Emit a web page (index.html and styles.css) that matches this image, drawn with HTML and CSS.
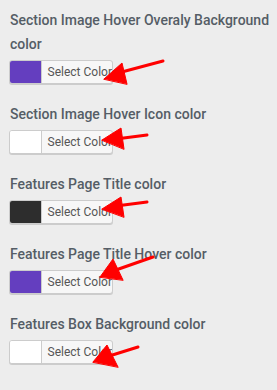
FILE: index.html
```html
<!DOCTYPE html>
<html lang="en">

<head>
    <meta charset="UTF-8">
    <meta name="viewport" content="width=device-width, initial-scale=1.0">
    <title>Color options</title>
    <link rel="stylesheet" href="styles.css">
</head>

<body>
    <div class="options">
        <div class="option">
            <label class="option-label">Section Image Hover Overaly Background color</label>
            <button class="color-btn"><span class="swatch purple"></span><span class="btn-text">Select Color</span></button>
        </div>
        <div class="option">
            <label class="option-label">Section Image Hover Icon color</label>
            <button class="color-btn"><span class="swatch white"></span><span class="btn-text">Select Color</span></button>
        </div>
        <div class="option">
            <label class="option-label">Features Page Title color</label>
            <button class="color-btn"><span class="swatch dark"></span><span class="btn-text">Select Color</span></button>
        </div>
        <div class="option">
            <label class="option-label">Features Page Title Hover color</label>
            <button class="color-btn"><span class="swatch purple"></span><span class="btn-text">Select Color</span></button>
        </div>
        <div class="option">
            <label class="option-label">Features Box Background color</label>
            <button class="color-btn"><span class="swatch white"></span><span class="btn-text">Select Color</span></button>
        </div>
    </div>

    <!-- annotation arrows -->
    <svg class="arrows" width="277" height="390" viewBox="0 0 277 390">
        <g fill="#f00" stroke="#f00" stroke-width="3" stroke-linecap="round">
            <line x1="163" y1="61" x2="118" y2="73" />
            <polygon stroke-width="1" points="104,79 122,63 127,84" />
            <line x1="147" y1="135" x2="116" y2="139" />
            <polygon stroke-width="1" points="102,140 121,128 124,149" />
            <line x1="147" y1="202" x2="116" y2="206" />
            <polygon stroke-width="1" points="102,209 121,197 124,217" />
            <line x1="153" y1="257" x2="113" y2="271" />
            <polygon stroke-width="1" points="100,277 113,259 123,280" />
            <line x1="138" y1="347" x2="106" y2="357" />
            <polygon stroke-width="1" points="93,362 107,345 118,367" />
        </g>
    </svg>
</body>

</html>
```

FILE: styles.css
```css
body {
    margin: 0;
    background-color: #ededed;
    font-family: Roboto, "Liberation Sans", Arial, sans-serif;
    position: relative;
    width: 277px;
    height: 390px;
    overflow: hidden;
}

.options {
    padding: 8px 0 8px 9px;
}

.option {
    margin-bottom: 18px;
}

.option-label {
    display: block;
    padding-left: 1px;
    font-size: 14px;
    font-weight: 500;
    line-height: 24px;
    color: #555d66;
    margin-bottom: 4px;
}

.color-btn {
    display: flex;
    align-items: stretch;
    width: 104px;
    height: 24px;
    padding: 0;
    border: 1px solid #ccc;
    border-radius: 3px;
    background-color: #f7f7f7;
    box-shadow: 0 1px 0 #ccc;
    overflow: hidden;
    font-family: Roboto, "Liberation Sans", Arial, sans-serif;
    cursor: pointer;
}

.swatch {
    width: 31px;
    border-right: 1px solid #ccc;
}

.swatch.purple {
    background-color: #643ebf;
}

.swatch.white {
    background-color: #fff;
}

.swatch.dark {
    background-color: #2d2d2d;
}

.btn-text {
    flex: 1;
    padding-left: 6px;
    font-size: 12px;
    line-height: 22px;
    color: #555;
    text-align: left;
    white-space: nowrap;
}

.arrows {
    position: absolute;
    left: 0;
    top: 0;
}
```
